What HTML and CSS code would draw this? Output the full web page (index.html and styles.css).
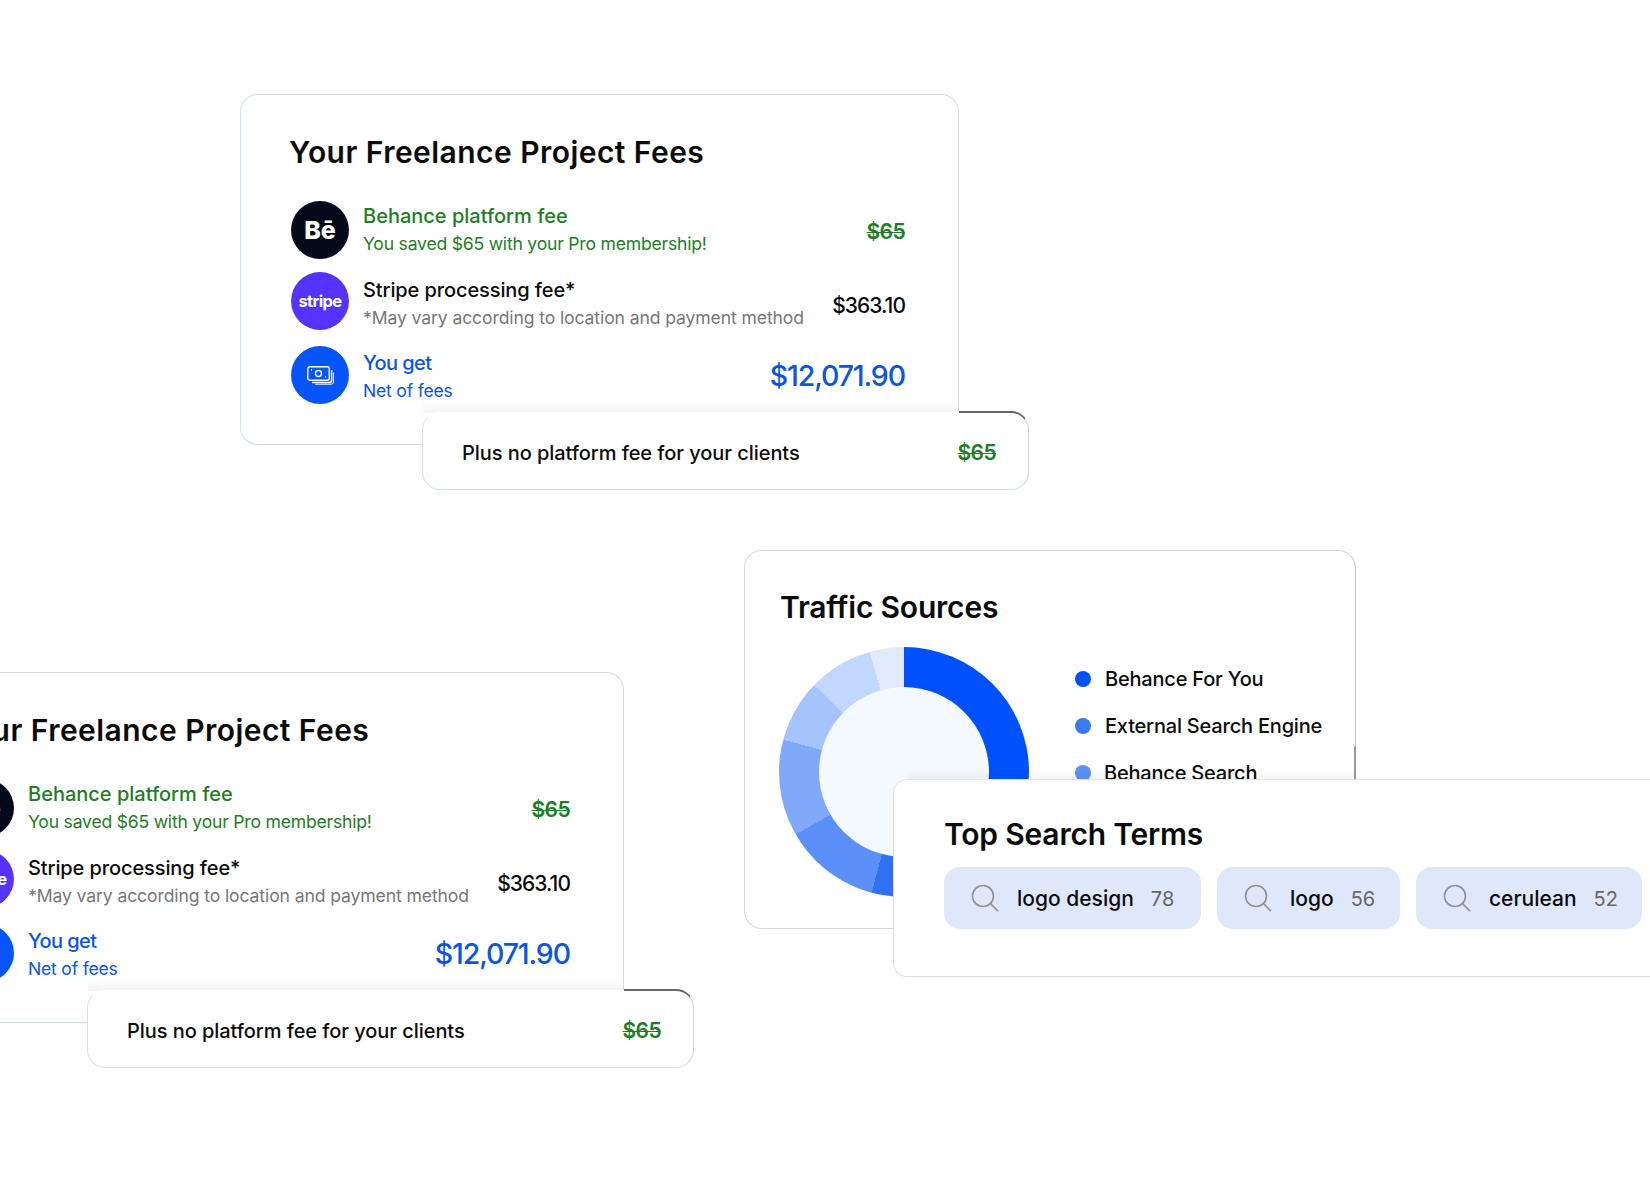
FILE: index.html
```html
<!DOCTYPE html>
<html lang="en">
<head>
  <meta charset="UTF-8" />
  <title>Freelance fees and insights</title>
  <link rel="stylesheet" href="styles.css">
</head>
<body>
  <!-- Fees, top -->
  <section class="fees fees-top">
    <div class="fee-card">
      <h2 class="card-title fee-title">Your Freelance Project Fees</h2>
      <div class="fee-row">
        <div class="fee-icon icon-behance">Bē</div>
        <div class="fee-text text-green">
          <div class="fee-name">Behance platform fee</div>
          <div class="fee-note">You saved $65 with your Pro membership!</div>
        </div>
        <div class="fee-amount text-green struck">$65</div>
      </div>
      <div class="fee-row row-stripe">
        <div class="fee-icon icon-stripe">stripe</div>
        <div class="fee-text">
          <div class="fee-name">Stripe processing fee*</div>
          <div class="fee-note text-grey">*May vary according to location and payment method</div>
        </div>
        <div class="fee-amount">$363.10</div>
      </div>
      <div class="fee-row row-net">
        <div class="fee-icon icon-money">
          <svg width="27" height="19" viewBox="0 0 27 19" fill="none" stroke="#fff" stroke-width="1.4">
            <rect x="0.8" y="0.8" width="21.5" height="13.4" rx="2" />
            <circle cx="11.5" cy="7.5" r="3" />
            <path d="M4 4h1M18 11h1" />
            <path d="M24.6 4v10.5a2 2 0 0 1-2 2H5" />
            <path d="M26.4 6.5v9.5a2.2 2.2 0 0 1-2.2 2.2H8" stroke-width="1" />
          </svg>
        </div>
        <div class="fee-text text-blue">
          <div class="fee-name">You get</div>
          <div class="fee-note">Net of fees</div>
        </div>
        <div class="fee-amount amount-big text-blue">$12,071.90</div>
      </div>
    </div>
    <div class="fee-pill">
      <span>Plus no platform fee for your clients</span>
      <span class="fee-amount text-green struck">$65</span>
    </div>
  </section>

  <!-- Fees, bottom left, runs off the page -->
  <section class="fees fees-bottom">
    <div class="fee-card">
      <h2 class="card-title fee-title">Your Freelance Project Fees</h2>
      <div class="fee-row">
        <div class="fee-icon icon-behance">Bē</div>
        <div class="fee-text text-green">
          <div class="fee-name">Behance platform fee</div>
          <div class="fee-note">You saved $65 with your Pro membership!</div>
        </div>
        <div class="fee-amount text-green struck">$65</div>
      </div>
      <div class="fee-row row-stripe">
        <div class="fee-icon icon-stripe">stripe</div>
        <div class="fee-text">
          <div class="fee-name">Stripe processing fee*</div>
          <div class="fee-note text-grey">*May vary according to location and payment method</div>
        </div>
        <div class="fee-amount">$363.10</div>
      </div>
      <div class="fee-row row-net">
        <div class="fee-icon icon-money"></div>
        <div class="fee-text text-blue">
          <div class="fee-name">You get</div>
          <div class="fee-note">Net of fees</div>
        </div>
        <div class="fee-amount amount-big text-blue">$12,071.90</div>
      </div>
    </div>
    <div class="fee-pill">
      <span>Plus no platform fee for your clients</span>
      <span class="fee-amount text-green struck">$65</span>
    </div>
  </section>

  <!-- Traffic Sources -->
  <section class="traffic-card">
    <h2 class="card-title">Traffic Sources</h2>
    <div class="traffic-body">
      <div class="donut"><div class="donut-hole"></div></div>
      <ul class="legend">
        <li><span class="dot dot-1"></span>Behance For You</li>
        <li><span class="dot dot-2"></span>External Search Engine</li>
        <li><span class="dot dot-3"></span>Behance Search</li>
      </ul>
    </div>
  </section>

  <!-- Top Search Terms -->
  <section class="terms-card">
    <h2 class="card-title">Top Search Terms</h2>
    <div class="terms">
      <div class="term term-1">
        <svg class="search-icon" width="28" height="28" viewBox="0 0 28 28" fill="none" stroke="#8f8f8f" stroke-width="1.6"><circle cx="12" cy="12" r="10.5" /><path d="M19.6 19.6l7.4 7.6" /></svg>
        <span class="term-name">logo design</span><span class="term-count">78</span>
      </div>
      <div class="term term-2">
        <svg class="search-icon" width="28" height="28" viewBox="0 0 28 28" fill="none" stroke="#8f8f8f" stroke-width="1.6"><circle cx="12" cy="12" r="10.5" /><path d="M19.6 19.6l7.4 7.6" /></svg>
        <span class="term-name">logo</span><span class="term-count">56</span>
      </div>
      <div class="term term-3">
        <svg class="search-icon" width="28" height="28" viewBox="0 0 28 28" fill="none" stroke="#8f8f8f" stroke-width="1.6"><circle cx="12" cy="12" r="10.5" /><path d="M19.6 19.6l7.4 7.6" /></svg>
        <span class="term-name">cerulean</span><span class="term-count">52</span>
      </div>
    </div>
  </section>
</body>
</html>
```

FILE: styles.css
```css
* {
  margin: 0;
  padding: 0;
  box-sizing: border-box;
}

body {
  font-family: 'Inter', 'Liberation Sans', sans-serif;
  background: #fff;
  color: #0c0c0c;
  width: 1650px;
  height: 1200px;
  position: relative;
  overflow: hidden;
}

.card-title {
  font-size: 30px;
  line-height: 36px;
  font-weight: 600;
  letter-spacing: -0.2px;
}

.text-green { color: #1e7d25; }
.text-blue { color: #0b55e0; }

/* Fee cards */
.fees {
  position: absolute;
  width: 788px;
  height: 396px;
}

.fees-top {
  left: 240px;
  top: 94px;
}

.fees-bottom {
  left: -95px;
  top: 672px;
}

.fee-card {
  position: relative;
  width: 719px;
  height: 351px;
  padding: 39px 53px 0 50px;
  background: #fff;
  border: 1px solid #d5dadd;
  border-left-color: #cfe2ee;
  border-bottom-color: #c4dcec;
  border-radius: 18px;
}

/* soft shade the pill throws on the card */
.fee-card::after {
  content: '';
  position: absolute;
  left: 182px;
  right: 0;
  top: 305px;
  height: 13px;
  background: linear-gradient(rgba(0, 0, 0, 0), rgba(0, 0, 0, 0.05));
}

.fee-title {
  margin: 0 0 31px -2px;
  letter-spacing: 0.45px;
}

.fee-row {
  display: flex;
  align-items: center;
  height: 58px;
  margin-bottom: 13px;
}

.fee-icon {
  width: 58px;
  height: 58px;
  flex: none;
  margin-right: 14px;
  border-radius: 50%;
  color: #fff;
  display: flex;
  align-items: center;
  justify-content: center;
}

.icon-behance {
  background: #050a1a;
  font-size: 25px;
  font-weight: 800;
}

.icon-stripe {
  background: #5433ff;
  font-size: 16.5px;
  font-weight: 700;
  letter-spacing: -0.6px;
}

.icon-money {
  background: #0555fa;
}

.fee-text {
  flex: 1;
}

.row-stripe .fee-text {
  padding-top: 6px;
}

.row-net {
  margin-top: 16px;
}

.row-net .fee-text {
  padding-top: 4px;
}

.fee-name {
  font-size: 20px;
  line-height: 28px;
  font-weight: 500;
}

.row-stripe .fee-name {
  letter-spacing: -0.1px;
}

.row-net .fee-name {
  letter-spacing: -0.6px;
}

.fee-note {
  font-size: 17.6px;
  line-height: 28px;
  letter-spacing: -0.22px;
}

.fee-note.text-grey {
  color: #777;
  letter-spacing: -0.12px;
}

.fee-amount {
  font-size: 21px;
  font-weight: 500;
  letter-spacing: -0.95px;
  padding-top: 2px;
}

.row-stripe .fee-amount {
  padding-top: 8px;
}

.fee-amount.struck {
  font-weight: 600;
  letter-spacing: -0.6px;
  text-decoration: line-through;
  text-decoration-thickness: 1px;
}

.fee-amount.amount-big {
  font-size: 28.5px;
  letter-spacing: -1.1px;
  padding-top: 0;
}

.fee-pill {
  position: absolute;
  left: 182px;
  top: 318px;
  width: 607px;
  height: 78px;
  padding: 0 32px 0 39px;
  background: #fff;
  border: 1px solid #d3e3ee;
  border-top-color: #fff;
  border-right-color: #cfd6da;
  border-radius: 18px;
  display: flex;
  align-items: center;
  justify-content: space-between;
  font-size: 20px;
  font-weight: 500;
  letter-spacing: -0.06px;
}

.fee-pill span {
  padding-top: 3px;
}

/* dark edge where the pill leaves the card */
.fee-pill::before {
  content: '';
  position: absolute;
  left: 536px;
  right: -1px;
  top: -2px;
  height: 20px;
  border-top: 2px solid #666;
  border-right: 1px solid transparent;
  border-top-right-radius: 18px;
}

/* Traffic Sources */
.traffic-card {
  position: absolute;
  left: 744px;
  top: 550px;
  width: 612px;
  height: 379px;
  padding: 38px 0 0 35px;
  background: #fff;
  border: 1px solid #d8d8d8;
  border-right-color: #cfc4ba;
  border-radius: 18px;
}

/* grey bit of the right edge, just above the terms card */
.traffic-card::after {
  content: '';
  position: absolute;
  right: -1px;
  top: 195px;
  width: 2px;
  height: 35px;
  background: #999;
}

.traffic-body {
  display: flex;
  margin: 22px 0 0 -1px;
}

.donut {
  width: 250px;
  height: 250px;
  flex: none;
  border-radius: 50%;
  background: conic-gradient(#0051fb 0 105deg, #2f70f5 105deg 195deg, #5b90fa 195deg 240deg, #80a9fb 240deg 285deg, #a6c4fc 285deg 314deg, #c2d7fd 314deg 344deg, #e2ebfd 344deg 360deg);
  display: flex;
  align-items: center;
  justify-content: center;
}

.donut-hole {
  width: 170px;
  height: 170px;
  border-radius: 50%;
  background: #f4f8ff;
}

.legend {
  list-style: none;
  margin: 20px 0 0 46px;
  font-size: 20px;
  font-weight: 500;
  letter-spacing: -0.2px;
}

.legend li {
  display: flex;
  align-items: center;
  height: 24px;
  margin-bottom: 23px;
  white-space: nowrap;
}

.dot {
  width: 16px;
  height: 16px;
  margin-right: 14px;
  border-radius: 50%;
}

.dot-1 { background: #0051fb; }
.dot-2 { background: #3a7af5; }
.dot-3 { background: #5b90fa; margin-right: 13px; }

/* Top Search Terms */
.terms-card {
  position: absolute;
  left: 893px;
  top: 779px;
  width: 800px;
  height: 198px;
  padding: 36px 0 0 50px;
  background: #fff;
  border: 1px solid #e2dcd8;
  border-top-color: #e4e4e4;
  border-radius: 14px 0 0 14px;
}

/* shade on the traffic card above the terms card */
.terms-card::before {
  content: '';
  position: absolute;
  left: 14px;
  top: -11px;
  width: 447px;
  height: 10px;
  background: linear-gradient(rgba(0, 0, 0, 0), rgba(0, 0, 0, 0.04));
}

.terms {
  display: flex;
  gap: 16px;
  margin-top: 15px;
}

.term {
  height: 62px;
  padding-left: 27px;
  display: flex;
  align-items: center;
  background: #dfe7fb;
  border-radius: 16px;
  font-size: 21px;
  font-weight: 500;
}

.term-1 { width: 257px; }
.term-2 { width: 183px; }
.term-3 { width: 226px; }

.search-icon {
  margin-right: 18px;
  flex: none;
}

.term-name {
  padding-top: 1px;
}

.term-count {
  margin-left: 17px;
  padding-top: 1px;
  font-size: 20px;
  font-weight: 400;
  color: #666;
}
```
